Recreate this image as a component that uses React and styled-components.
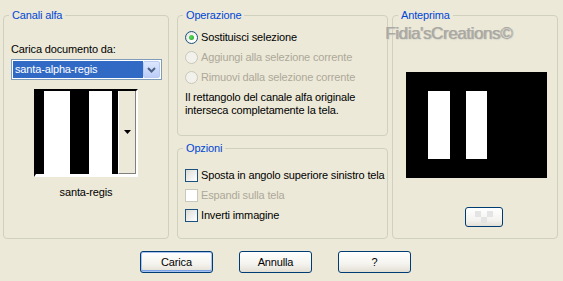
import React from 'react'
import styled, { createGlobalStyle } from 'styled-components'

const GlobalStyle = createGlobalStyle`
    body {
        margin: 0;
        background: #ECE9D8;
        font-family: "Liberation Sans", Arial, sans-serif;
        font-size: 11px;
        letter-spacing: -0.15px;
        color: #000;
    }
`

const App = () => {
    return (
        <Dialog>
            <GlobalStyle />
            <Body>
                <LeftColumn>
                    <Group height={230}>
                        <Legend>Canali alfa</Legend>
                        <Label>Carica documento da:</Label>
                        <Combo>
                            <ComboValue>santa-alpha-regis</ComboValue>
                            <ComboButton>
                                <svg width="9" height="6" viewBox="0 0 9 6">
                                    <path d="M1 1 L4.5 4.5 L8 1" fill="none" stroke="#4D6185" strokeWidth="2" />
                                </svg>
                            </ComboButton>
                        </Combo>
                        <Thumb>
                            <svg width="82" height="83" viewBox="0 0 82 83" preserveAspectRatio="none">
                                <rect width="82" height="83" fill="#fff" />
                                <rect x="0" width="8" height="83" fill="#000" />
                                <rect x="34" width="19" height="83" fill="#000" />
                                <rect x="76" width="6" height="83" fill="#000" />
                            </svg>
                            <ThumbButton>
                                <svg width="7" height="4" viewBox="0 0 7 4">
                                    <path d="M0 0 H7 L3.5 4 Z" fill="#000" />
                                </svg>
                            </ThumbButton>
                        </Thumb>
                        <Caption>santa-regis</Caption>
                    </Group>
                </LeftColumn>

                <MiddleColumn>
                    <Group height={127}>
                        <Legend>Operazione</Legend>
                        <OptionList top={5}>
                            <OptionRow>
                                <Radio checked />
                                <OptionText>Sostituisci selezione</OptionText>
                            </OptionRow>
                            <OptionRow>
                                <Radio disabled />
                                <OptionText disabled>Aggiungi alla selezione corrente</OptionText>
                            </OptionRow>
                            <OptionRow>
                                <Radio disabled />
                                <OptionText disabled>Rimuovi dalla selezione corrente</OptionText>
                            </OptionRow>
                        </OptionList>
                        <Note>
                            Il rettangolo del canale alfa originale<br />
                            interseca completamente la tela.
                        </Note>
                    </Group>

                    <Group height={97}>
                        <Legend>Opzioni</Legend>
                        <OptionList top={10}>
                            <OptionRow>
                                <Check />
                                <OptionText>Sposta in angolo superiore sinistro tela</OptionText>
                            </OptionRow>
                            <OptionRow>
                                <Check disabled />
                                <OptionText disabled>Espandi sulla tela</OptionText>
                            </OptionRow>
                            <OptionRow>
                                <Check />
                                <OptionText>Inverti immagine</OptionText>
                            </OptionRow>
                        </OptionList>
                    </Group>
                </MiddleColumn>

                <RightColumn>
                    <Group height={230}>
                        <Legend>Anteprima</Legend>
                        <Preview>
                            <svg width="141" height="106" viewBox="0 0 141 106">
                                <rect width="141" height="106" fill="#000" />
                                <rect x="22" y="19" width="22" height="68" fill="#fff" />
                                <rect x="60" y="19" width="21" height="68" fill="#fff" />
                            </svg>
                        </Preview>
                        <SmallButton>
                            <svg width="18" height="12" viewBox="0 0 18 12">
                                <rect x="0" y="0" width="6" height="6" fill="#E4E4E4" />
                                <rect x="12" y="0" width="6" height="6" fill="#E4E4E4" />
                                <rect x="6" y="6" width="6" height="6" fill="#E4E4E4" />
                            </svg>
                        </SmallButton>
                    </Group>
                    <Watermark>Fidia'sCreations©</Watermark>
                </RightColumn>
            </Body>

            <ButtonRow>
                <Button isDefault>Carica</Button>
                <Button>Annulla</Button>
                <Button>?</Button>
            </ButtonRow>
        </Dialog>
    )
}

export default App


const Dialog = styled.div`
    width: 563px;
    height: 281px;
    box-sizing: border-box;
    padding: 9px 0 0 3px;
`

const Body = styled.div`
    display: flex;
    align-items: flex-start;
`

const LeftColumn = styled.div`
    width: 166px;
`

const MiddleColumn = styled.div`
    width: 211px;
    margin-left: 8px;
    display: flex;
    flex-direction: column;
    gap: 6px;
`

const RightColumn = styled.div`
    position: relative;
    width: 166px;
    margin-left: 4px;
`

const Group = styled.fieldset`
    box-sizing: border-box;
    height: ${p => p.height}px;
    margin: 0;
    padding: 0;
    min-width: 0;
    border: 1px solid #D0D0BF;
    border-radius: 4px;
    display: flex;
    flex-direction: column;
`

const Legend = styled.legend`
    margin-left: 5px;
    padding: 0 3px 0 3px;
    line-height: 13px;
    color: #0046D5;
`

const Label = styled.div`
    margin: 21px 0 0 7px;
    line-height: 13px;
`

const Combo = styled.div`
    box-sizing: border-box;
    width: 151px;
    height: 21px;
    margin: 3px 0 0 7px;
    padding: 1px;
    border: 1px solid #7F9DB9;
    background: #fff;
    display: flex;
`

const ComboValue = styled.div`
    flex: 1;
    padding-left: 2px;
    background: #316AC5;
    color: #fff;
    line-height: 17px;
`

const ComboButton = styled.div`
    box-sizing: border-box;
    width: 17px;
    border: 1px solid #B9CBF3;
    border-radius: 2px;
    background: linear-gradient(#DCE6FD, #BCCDF6);
    display: flex;
    align-items: center;
    justify-content: center;
`

const Thumb = styled.div`
    box-sizing: border-box;
    width: 104px;
    height: 88px;
    margin: 9px auto 0;
    border-top: 2px solid #000;
    border-left: 2px solid #000;
    border-right: 2px solid #fff;
    border-bottom: 3px solid #fff;
    display: flex;

    svg {
        display: block;
    }
`

const ThumbButton = styled.div`
    flex: 1;
    box-sizing: border-box;
    border-left: 1px solid #fff;
    border-right: 1px solid #808080;
    border-bottom: 1px solid #808080;
    background: #ECE9D8;
    display: flex;
    align-items: center;
    justify-content: center;
`

const Caption = styled.div`
    margin-top: 9px;
    text-align: center;
    line-height: 13px;
`

const OptionList = styled.div`
    margin: ${p => p.top}px 0 0 7px;
    display: flex;
    flex-direction: column;
`

const OptionRow = styled.div`
    height: 20px;
    display: flex;
    align-items: center;
    gap: 3px;
`

const OptionText = styled.span`
    color: ${p => (p.disabled ? '#ACA899' : '#000')};
    white-space: nowrap;
`

const Radio = styled.span`
    box-sizing: border-box;
    width: 13px;
    height: 13px;
    border-radius: 50%;
    border: 1px solid ${p => (p.disabled ? '#CAC8BB' : '#1C5180')};
    background: ${p => (p.disabled
        ? '#F2F1EB'
        : 'radial-gradient(circle at 65% 65%, #fff 30%, #DCDCD6 90%)')};
    display: flex;
    align-items: center;
    justify-content: center;

    &::after {
        content: '';
        display: ${p => (p.checked ? 'block' : 'none')};
        width: 5px;
        height: 5px;
        border-radius: 50%;
        background: radial-gradient(circle at 40% 40%, #5EDA5E, #21A121);
    }
`

const Check = styled.span`
    box-sizing: border-box;
    width: 13px;
    height: 13px;
    border: 1px solid ${p => (p.disabled ? '#CAC8BB' : '#1C5180')};
    background: ${p => (p.disabled
        ? '#fff'
        : 'linear-gradient(135deg, #DCDCD7, #fff)')};
`

const Note = styled.div`
    margin: 4px 0 0 7px;
    line-height: 13px;
`

const Preview = styled.div`
    margin: 50px 0 0 13px;

    svg {
        display: block;
    }
`

const SmallButton = styled.div`
    box-sizing: border-box;
    width: 38px;
    height: 20px;
    margin: 29px 0 0 72px;
    border: 1px solid #003C74;
    border-radius: 3px;
    background: linear-gradient(#fff, #F3F2EE 70%, #E3E0D6);
    display: flex;
    align-items: center;
    justify-content: center;
`

const Watermark = styled.div`
    position: absolute;
    left: -7px;
    top: 15px;
    font-size: 17px;
    letter-spacing: -0.4px;
    color: #A9A8A2;
    text-shadow: 1px 0 0 #B8B7B0, 1px 1px 1px #D6D4C9;
    white-space: nowrap;
`

const ButtonRow = styled.div`
    display: flex;
    gap: 26px;
    margin-top: 12px;
    padding-left: 137px;
`

const Button = styled.button`
    box-sizing: border-box;
    width: 73px;
    height: 22px;
    padding: 0;
    border: 1px solid #003C74;
    border-radius: 3px;
    background: linear-gradient(#fff, #F4F3EE 60%, #E2DED3);
    box-shadow: ${p => (p.isDefault
        ? 'inset 0 0 0 1px #A8C3F0, inset 0 -1px 0 1px #7DA2E4'
        : 'none')};
    font-family: "Liberation Sans", Arial, sans-serif;
    font-size: 11px;
    letter-spacing: -0.15px;
    color: #000;
`
